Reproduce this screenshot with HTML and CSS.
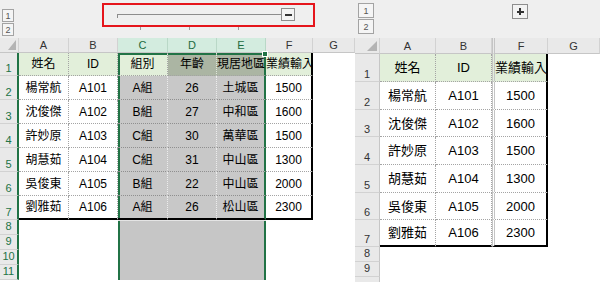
FILE: index.html
```html
<html lang="zh-Hant">
<head>
    <meta charset="UTF-8">
    <title>群組欄位</title>
    <link rel="stylesheet" href="styles.css">
</head>
<body>
    <!-- Left: columns C:E grouped and expanded -->
    <div class="panel panel-left">
        <div class="outline-strip">
            <div class="levels">
                <span class="level">1</span>
                <span class="level">2</span>
            </div>
            <div class="group-wrap">
                <div class="group-box">
                    <div class="group-line"></div>
                    <span class="group-btn minus"></span>
                </div>
                <div class="group-ticks"><i></i><i></i><i></i></div>
            </div>
        </div>

        <div class="sheet sheet-left">
            <div class="corner"><svg width="8" height="10"><polygon points="8,0 8,10 0,10" fill="#b4b4b4"/></svg></div>
            <div class="ch">A</div>
            <div class="ch">B</div>
            <div class="ch sel">C</div>
            <div class="ch sel">D</div>
            <div class="ch sel">E</div>
            <div class="ch">F</div>
            <div class="ch">G</div>

            <div class="rh">1</div>
            <div class="c head">姓名</div>
            <div class="c head">ID</div>
            <div class="c head edge-tl">組別</div>
            <div class="c shade edge-t">年齡</div>
            <div class="c shade edge-tr handle">現居地區</div>
            <div class="c head last-col">業績輸入</div>
            <div class="c blank"></div>

            <div class="rh">2</div>
            <div class="c">楊常航</div>
            <div class="c">A101</div>
            <div class="c grey edge-l">A組</div>
            <div class="c grey">26</div>
            <div class="c grey edge-r">土城區</div>
            <div class="c last-col">1500</div>
            <div class="c blank"></div>

            <div class="rh">3</div>
            <div class="c">沈俊傑</div>
            <div class="c">A102</div>
            <div class="c grey edge-l">B組</div>
            <div class="c grey">27</div>
            <div class="c grey edge-r">中和區</div>
            <div class="c last-col">1600</div>
            <div class="c blank"></div>

            <div class="rh">4</div>
            <div class="c">許妙原</div>
            <div class="c">A103</div>
            <div class="c grey edge-l">C組</div>
            <div class="c grey">30</div>
            <div class="c grey edge-r">萬華區</div>
            <div class="c last-col">1500</div>
            <div class="c blank"></div>

            <div class="rh">5</div>
            <div class="c">胡慧茹</div>
            <div class="c">A104</div>
            <div class="c grey edge-l">C組</div>
            <div class="c grey">31</div>
            <div class="c grey edge-r">中山區</div>
            <div class="c last-col">1300</div>
            <div class="c blank"></div>

            <div class="rh">6</div>
            <div class="c">吳俊東</div>
            <div class="c">A105</div>
            <div class="c grey edge-l">B組</div>
            <div class="c grey">22</div>
            <div class="c grey edge-r">中山區</div>
            <div class="c last-col">2000</div>
            <div class="c blank"></div>

            <div class="rh">7</div>
            <div class="c bottom">劉雅茹</div>
            <div class="c bottom">A106</div>
            <div class="c grey bottom edge-l">A組</div>
            <div class="c grey bottom">26</div>
            <div class="c grey bottom edge-r">松山區</div>
            <div class="c bottom last-col">2300</div>
            <div class="c blank"></div>

            <div class="fill-sel"></div>
            <div class="rh short">8</div>
            <div class="rh short">9</div>
            <div class="rh short">10</div>
            <div class="rh short">11</div>
        </div>
    </div>

    <!-- Right: same sheet with C:E collapsed -->
    <div class="panel panel-right">
        <div class="outline-strip">
            <div class="levels">
                <span class="level">1</span>
                <span class="level">2</span>
            </div>
            <span class="group-btn plus"></span>
        </div>

        <div class="sheet sheet-right">
            <div class="corner"><svg width="10" height="10"><polygon points="10,0 10,10 0,10" fill="#b4b4b4"/></svg></div>
            <div class="ch">A</div>
            <div class="ch">B</div>
            <div class="ch hid-left">F</div>
            <div class="ch">G</div>

            <div class="rh">1</div>
            <div class="c head">姓名</div>
            <div class="c head">ID</div>
            <div class="c head hid-left last-col">業績輸入</div>
            <div class="c blank"></div>

            <div class="rh">2</div>
            <div class="c">楊常航</div>
            <div class="c">A101</div>
            <div class="c hid-left last-col">1500</div>
            <div class="c blank"></div>

            <div class="rh">3</div>
            <div class="c">沈俊傑</div>
            <div class="c">A102</div>
            <div class="c hid-left last-col">1600</div>
            <div class="c blank"></div>

            <div class="rh">4</div>
            <div class="c">許妙原</div>
            <div class="c">A103</div>
            <div class="c hid-left last-col">1500</div>
            <div class="c blank"></div>

            <div class="rh">5</div>
            <div class="c">胡慧茹</div>
            <div class="c">A104</div>
            <div class="c hid-left last-col">1300</div>
            <div class="c blank"></div>

            <div class="rh">6</div>
            <div class="c">吳俊東</div>
            <div class="c">A105</div>
            <div class="c hid-left last-col">2000</div>
            <div class="c blank"></div>

            <div class="rh">7</div>
            <div class="c bottom">劉雅茹</div>
            <div class="c bottom">A106</div>
            <div class="c bottom hid-left last-col">2300</div>
            <div class="c blank"></div>

            <div class="rh short">8</div>
            <div class="rh short">9</div>
            <div class="rh short"></div>
        </div>
    </div>
</body>
</html>
```

FILE: styles.css
```css
body {
    margin: 0;
    width: 600px;
    height: 282px;
    overflow: hidden;
    display: flex;
    background-color: #fff;
    color: #000;
    font-family: "Liberation Sans", "Noto Sans CJK TC", sans-serif;
}

.panel {
    flex: none;
    display: flex;
    flex-direction: column;
}

.panel-left {
    width: 355px;
}

.panel-right {
    width: 245px;
}

/* Outline (group) strip above the headers */
.outline-strip {
    flex: none;
    height: 38px;
    display: flex;
    align-items: flex-start;
    background-color: #efefef;
}

.levels {
    display: flex;
    flex-direction: column;
    gap: 1px;
}

.panel-left .levels {
    margin: 9px 0 0 2px;
}

.panel-right .levels {
    margin: 3px 0 0 3px;
}

.level {
    box-sizing: border-box;
    display: flex;
    align-items: center;
    justify-content: center;
    border: 1px solid #a3a3a3;
    background-color: #f5f5f5;
    color: #555;
    font-size: 9px;
}

.panel-left .level {
    width: 12px;
    height: 13px;
}

.panel-right .level {
    width: 16px;
    height: 15px;
}

.group-wrap {
    margin: 3px 0 0 88px;
}

.group-box {
    box-sizing: border-box;
    width: 213px;
    height: 24px;
    border: 2px solid #e5151b;
    display: flex;
    align-items: flex-start;
}

.group-line {
    box-sizing: border-box;
    width: 164px;
    height: 4px;
    margin: 9px 0 0 13px;
    border-top: 1px solid #8c8c8c;
    border-left: 1px solid #8c8c8c;
}

.group-btn {
    box-sizing: border-box;
    position: relative;
    display: block;
    border: 1px solid #8e8e8e;
    background-color: #f3f3f3;
}

.group-btn.minus {
    width: 14px;
    height: 13px;
    margin-top: 3px;
}

.group-btn.plus {
    width: 16px;
    height: 15px;
    margin: 4px 0 0 138px;
}

.group-btn::before,
.group-btn.plus::after {
    content: "";
    position: absolute;
    left: 50%;
    top: 50%;
    width: 7px;
    height: 2px;
    margin: -1px 0 0 -3.5px;
    background-color: #333;
}

.group-btn.plus::after {
    width: 2px;
    height: 7px;
    margin: -3.5px 0 0 -1px;
}

.group-ticks {
    display: flex;
    gap: 48px;
    padding-left: 38px;
}

.group-ticks i {
    width: 1px;
    height: 3px;
    background-color: #9a9a9a;
}

/* Sheet grids */
.sheet {
    display: grid;
    flex: 1;
    overflow: hidden;
    background-color: #fff;
}

.sheet-left {
    grid-template-columns: 19px 50px 49px 50px 49px 49px 47px 42px;
    grid-template-rows: 15px 23px repeat(6, 24px) repeat(4, 15px);
}

.sheet-right {
    grid-template-columns: 25px 56px 56px 56px 52px;
    grid-template-rows: 16px 28px 28px 27px 28px 28px 27px 27px repeat(3, 15px);
}

.sheet > div {
    box-sizing: border-box;
    min-width: 0;
}

.corner {
    display: flex;
    align-items: flex-end;
    justify-content: flex-end;
    padding: 0 2px 2px 0;
    background-color: #e9e9e9;
    border-right: 1px solid #d2d2d2;
    border-bottom: 1px solid #c6c6c6;
}

.ch {
    display: flex;
    align-items: center;
    justify-content: center;
    background-color: #e9e9e9;
    border-right: 1px solid #d2d2d2;
    border-bottom: 1px solid #c6c6c6;
    color: #333;
    font-size: 11px;
}

.ch.sel {
    background-color: #d3ecdf;
    border-right-color: #b9d8c7;
    color: #1d6b3e;
}

.rh {
    grid-column: 1;
    display: flex;
    align-items: flex-end;
    justify-content: center;
    padding-bottom: 1px;
    background-color: #e9e9e9;
    border-right: 1px solid #c6c6c6;
    border-bottom: 1px solid #d2d2d2;
    color: #333;
    font-size: 11px;
    line-height: 1;
}

.rh.short {
    padding-bottom: 2px;
}

.panel-left .rh {
    color: #217346;
    border-right: 2px solid #217346;
}

/* Cells */
.c {
    display: flex;
    align-items: center;
    justify-content: safe center;
    white-space: nowrap;
    overflow: hidden;
    line-height: 1;
    border-right: 1px dotted #a4a4a4;
    border-bottom: 1px dotted #a4a4a4;
}

.sheet-left .c {
    font-size: 12px;
}

.sheet-right .c {
    font-size: 13px;
}

.c.blank {
    border: none;
}

.c.head {
    background-color: #e2efda;
}

.c.grey {
    background-color: #c8c8c8;
    border-right-color: #ececec;
    border-bottom-color: #8f8f8f;
}

.c.shade {
    background-color: #abb5a3;
    border-right-color: #dfe6da;
}

.c.last-col {
    border-right: 2px solid #000;
}

.c.bottom {
    border-bottom: 2px solid #000;
}

.hid-left {
    border-left: 3px double #c4c4c4;
}

/* Selection of columns C:E */
.edge-l {
    box-shadow: inset 2px 0 0 #217346;
}

.edge-tl {
    box-shadow: inset 2px 0 0 #217346, inset 0 2px 0 #217346;
}

.edge-t {
    box-shadow: inset 0 2px 0 #217346;
}

.c.edge-r,
.c.edge-tr {
    border-right: 2px solid #217346;
}

.edge-tr {
    box-shadow: inset 0 2px 0 #217346;
}

.handle {
    position: relative;
    overflow: visible;
    z-index: 1;
}

.handle::after {
    content: "";
    position: absolute;
    top: -2px;
    right: -4px;
    width: 4px;
    height: 4px;
    background-color: #217346;
    border: 1px solid #fff;
}

.fill-sel {
    grid-column: 4 / 7;
    grid-row: 9 / 13;
    background-color: #c6c6c6;
    border-top: 1px solid #e4e4e4;
    box-shadow: inset 2px 0 0 #217346, inset -2px 0 0 #217346;
}
```
